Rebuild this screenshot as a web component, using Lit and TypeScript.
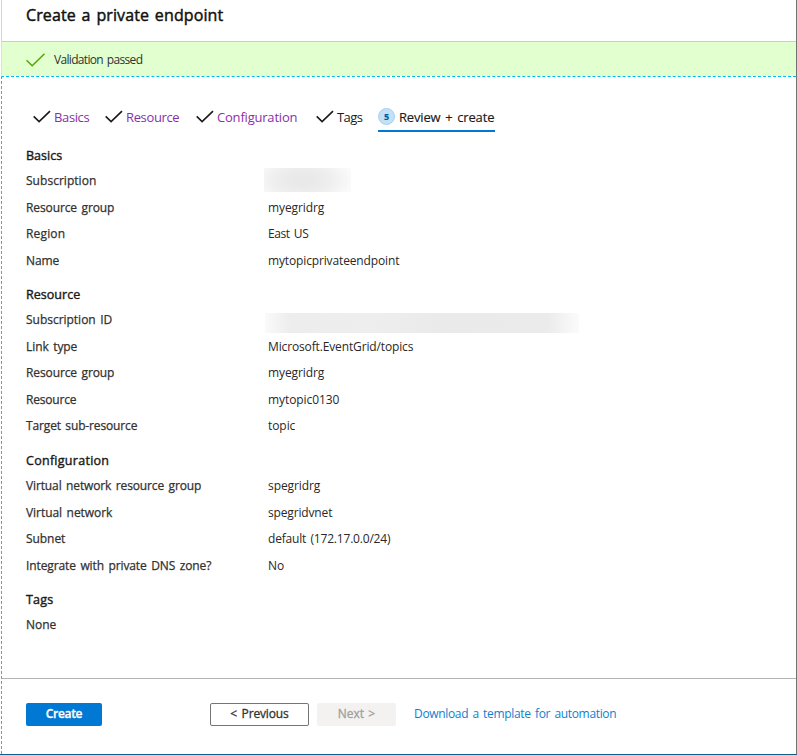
import { LitElement, html, css, svg } from "lit";
import { customElement, property, query } from "lit/decorators.js";

/** Text run whose tracking is adjusted so that it spans a given width. */
@customElement("fit-text")
class FitText extends LitElement {
  static styles = css`
    :host { display: inline-block; white-space: pre; word-spacing: 1.5px; }
  `;
  @property() text = "";
  @property({ type: Number }) span = 0;
  @query("span") run!: HTMLSpanElement;

  render() {
    return html`<span>${this.text}</span>`;
  }

  updated() {
    this.run.style.letterSpacing = "0";
    const natural = this.run.getBoundingClientRect().width;
    this.run.style.letterSpacing = `${(this.span + 0.3 - natural) / this.text.length}px`;
  }
}

const fit = (text: string, span: number) => html`<fit-text .text=${text} .span=${span}></fit-text>`;

type Row = { label: string; lw: number; value?: string; vw?: number; mask?: string };
type Section = { title: string; tw: number; rows: Row[] };

const sections: Section[] = [
  { title: "Basics", tw: 36, rows: [
    { label: "Subscription", lw: 70, mask: "short" },
    { label: "Resource group", lw: 88, value: "myegridrg", vw: 56 },
    { label: "Region", lw: 39, value: "East US", vw: 40 },
    { label: "Name", lw: 33, value: "mytopicprivateendpoint", vw: 131 },
  ] },
  { title: "Resource", tw: 54, rows: [
    { label: "Subscription ID", lw: 86, mask: "long" },
    { label: "Link type", lw: 51, value: "Microsoft.EventGrid/topics", vw: 145 },
    { label: "Resource group", lw: 88, value: "myegridrg", vw: 56 },
    { label: "Resource", lw: 50, value: "mytopic0130", vw: 71 },
    { label: "Target sub-resource", lw: 111, value: "topic", vw: 27 },
  ] },
  { title: "Configuration", tw: 83, rows: [
    { label: "Virtual network resource group", lw: 175, value: "spegridrg", vw: 52 },
    { label: "Virtual network", lw: 86, value: "spegridvnet", vw: 64 },
    { label: "Subnet", lw: 39, value: "default (172.17.0.0/24)", vw: 122 },
    { label: "Integrate with private DNS zone?", lw: 185, value: "No", vw: 16 },
  ] },
  { title: "Tags", tw: 27, rows: [{ label: "None", lw: 30 }] },
];

const check = html`<svg class="check" width="18" height="13" viewBox="0 0 18 13">
  ${svg`<path d="M.7 6.4 6.1 11.6 17 1.1" fill="none" stroke="currentColor" stroke-width="1.6"/>`}
</svg>`;

@customElement("app-root")
class AppRoot extends LitElement {
  static styles = css`
    :host {
      display: block;
      height: 755px;
      overflow: hidden;
      background: #fff;
      color: #1b1a19;
      font: 12px/16px "Open Sans", "Noto Sans", sans-serif;
    }
    * { box-sizing: border-box; }
    .page {
      height: 755px;
      display: flex;
      flex-direction: column;
      border-right: 1px solid #737373;
      border-bottom: 1px solid #0f5f8a;
    }
    .title {
      height: 42px;
      flex: none;
      margin: 0 0 0 1px;
      padding: 4px 0 0 24px;
      border-left: 1px solid #d6d6d6;
      border-bottom: 1px solid #ccc;
      font-size: 16px;
      line-height: 22px;
      font-weight: 400;
      -webkit-text-stroke: 0.45px;
      color: #111;
    }
    .banner {
      height: 34px;
      flex: none;
      margin-left: 1px;
      border-left: 1px solid #d9e3d2;
      background: #e1ffcf;
      display: flex;
      align-items: center;
      gap: 9px;
      padding: 2px 0 0 24px;
      color: #323130;
    }
    .ok { color: #57a300; margin-top: -1px; }
    .blade {
      flex: 1;
      display: flex;
      flex-direction: column;
      margin-left: 1px;
      border-top: 1px dashed #00bcf2;
      border-left: 1px dashed #2cb5e2;
    }
    .tabs {
      display: flex;
      height: 56px;
      padding: 30px 0 0 31px;
      font-size: 13px;
      line-height: 20px;
    }
    .tab { display: flex; align-items: flex-start; gap: 3px; color: #1b1a19; height: 25px; }
    .tab .check { margin-top: 3px; }
    .visited .name { color: #8b2fa8; }
    .t1 { width: 72px; }
    .t2 { width: 91px; }
    .t3 { width: 120px; }
    .t4 { width: 62px; }
    .active { border-bottom: 2px solid #0078d4; width: 117px; gap: 4px; -webkit-text-stroke: 0.15px; }
    .num {
      width: 17px; height: 17px; flex: none;
      border-radius: 50%;
      background: #c3e1f5;
      border: 1px solid #a5d0f5;
      font-size: 9px; line-height: 15px; font-weight: 700;
      text-align: center;
      color: #005a9e;
      margin-top: 1px;
    }
    .body { flex: 1; padding: 10.7px 0 0 24px; }
    .section { margin-bottom: 8.7px; }
    .heading {
      margin: 0; height: 24.5px; line-height: 24.5px;
      font-size: 12.5px; font-weight: 400; color: #1b1a19;
      -webkit-text-stroke: 0.4px;
    }
    .row { display: grid; grid-template-columns: 242px 1fr; height: 26.5px; line-height: 26.5px; }
    .label { color: #323130; -webkit-text-stroke: 0.25px; }
    .value { color: #292827; }
    .short {
      width: 87px; height: 24px; margin: 0 0 0 -4px;
      background: radial-gradient(ellipse 58% 110% at 44% 50%, #e9e9e9 20%, #efefef 60%, #fbfbfb 100%);
    }
    .long {
      width: 314px; height: 20px; margin: 6px 0 0 -3px;
      background: linear-gradient(90deg, #fafafa, #ededed 8%, #eee 35%, #eaeaea 55%, #ebebeb 90%, #fbfbfb);
    }
    .footer {
      height: 76px;
      flex: none;
      display: flex;
      align-items: flex-start;
      border-top: 1px solid #b3b3b3;
      padding: 24px 0 0 24px;
      line-height: 20px;
    }
    .btn {
      height: 23px;
      border: 1px solid transparent;
      border-radius: 2px;
      font: inherit;
      padding: 0;
      display: flex;
      align-items: flex-start;
      justify-content: center;
      -webkit-text-stroke: 0.3px;
    }
    .create { width: 76px; background: #0078d4; color: #fff; font-weight: 600; margin-right: 108px; }
    .prev { width: 99px; background: #fff; border-color: #767574; color: #323130; margin-right: 8px; }
    .next { width: 79px; background: #f3f2f1; color: #a19f9d; margin-right: 18px; }
    .link { color: #0f80d0; margin-top: 1px; text-decoration: none; }
  `;

  render() {
    return html`
      <div class="page">
        <h1 class="title">${fit("Create a private endpoint", 197)}</h1>
        <div class="banner">
          <svg class="ok" width="19" height="14" viewBox="0 0 19 14">
            <path d="M.5 7.2 6.2 12.7 18.5.8" fill="none" stroke="currentColor" stroke-width="1.5" />
          </svg>
          ${fit("Validation passed", 88)}
        </div>
        <div class="blade">
          <nav class="tabs">
            <div class="tab visited t1">${check}<span class="name">${fit("Basics", 35)}</span></div>
            <div class="tab visited t2">${check}<span class="name">${fit("Resource", 53)}</span></div>
            <div class="tab visited t3">${check}<span class="name">${fit("Configuration", 80)}</span></div>
            <div class="tab t4">${check}<span class="name">${fit("Tags", 25)}</span></div>
            <div class="tab active"><span class="num">5</span>${fit("Review + create", 95)}</div>
          </nav>
          <div class="body">
            ${sections.map((s) => html`
              <section class="section">
                <h2 class="heading">${fit(s.title, s.tw)}</h2>
                ${s.rows.map((r) => html`
                  <div class="row">
                    <span class="label">${fit(r.label, r.lw)}</span>
                    ${r.mask
                      ? html`<div class=${r.mask}></div>`
                      : r.value ? html`<span class="value">${fit(r.value, r.vw!)}</span>` : null}
                  </div>`)}
              </section>`)}
          </div>
          <div class="footer">
            <button class="btn create">${fit("Create", 36)}</button>
            <button class="btn prev">${fit("< Previous", 58)}</button>
            <button class="btn next" disabled>${fit("Next >", 37)}</button>
            <a class="link">${fit("Download a template for automation", 202)}</a>
          </div>
        </div>
      </div>
    `;
  }
}
